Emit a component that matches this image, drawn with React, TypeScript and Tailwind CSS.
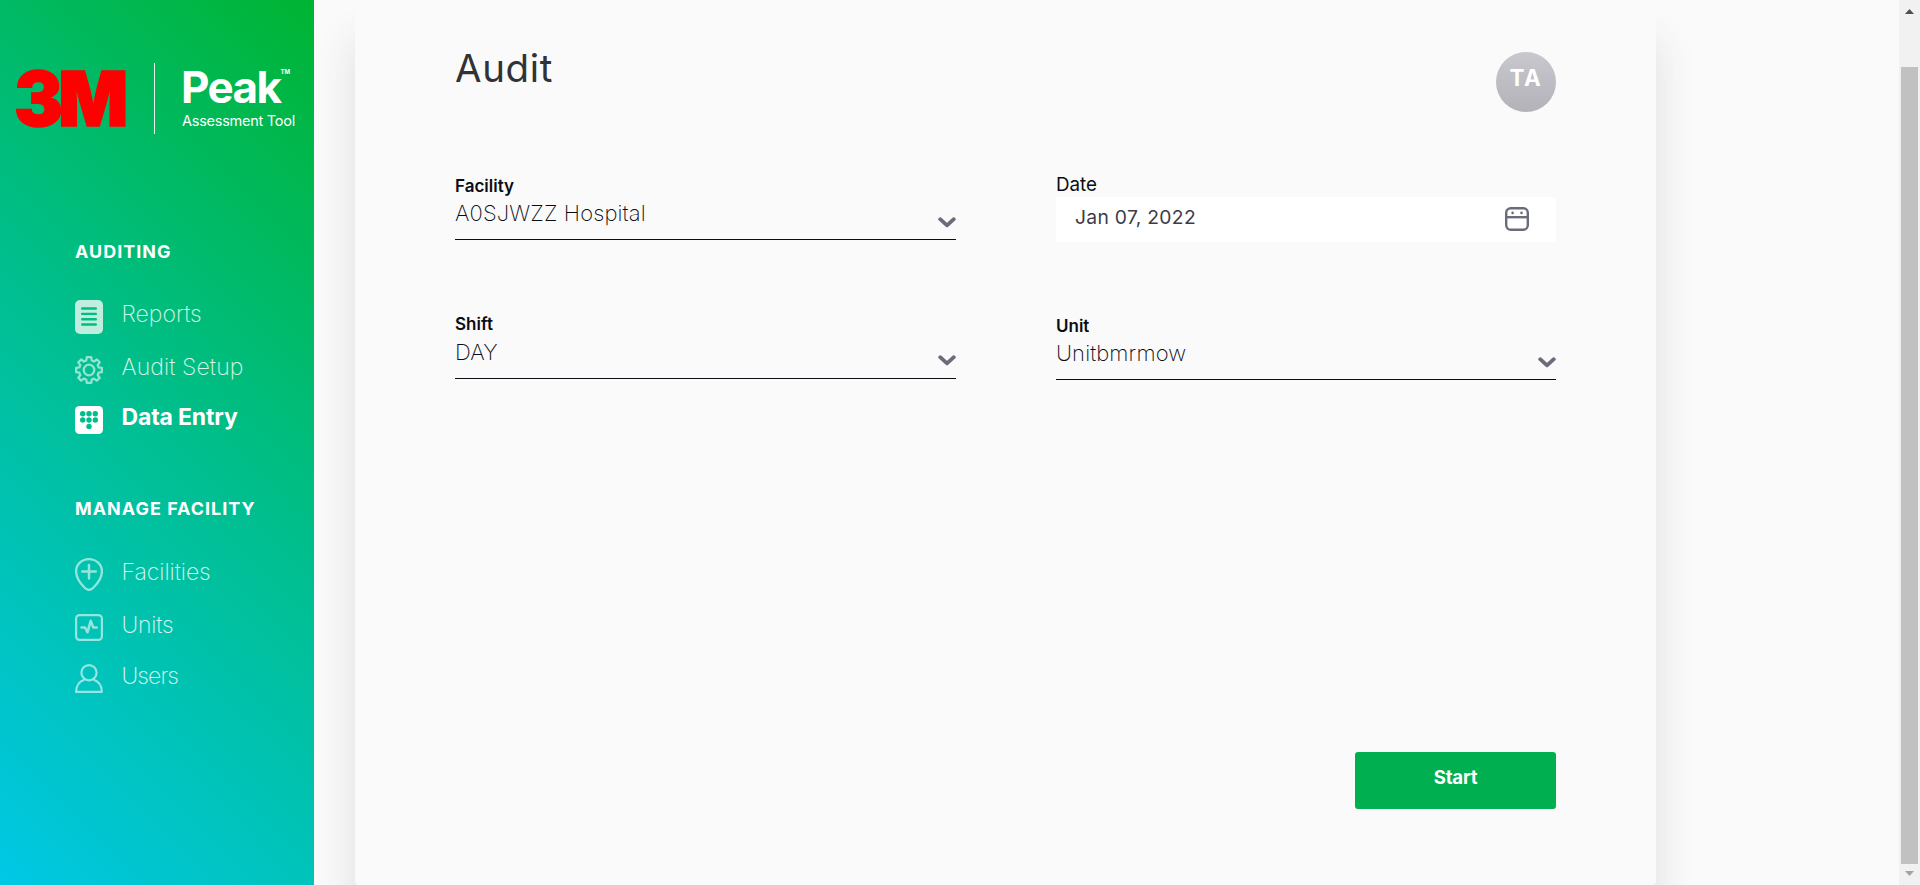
import React from "react";

function Heading({ children, className }: { children: React.ReactNode; className: string }) {
  return (
    <h2 className={`ml-[75px] h-[18px] whitespace-nowrap text-[17.900px] leading-[18px] font-bold text-white ${className}`}>
      {children}
    </h2>
  );
}

function NavItem({
  icon,
  iconClass,
  label,
  labelClass,
  className,
}: {
  icon: React.ReactNode;
  iconClass: string;
  label: string;
  labelClass: string;
  className: string;
}) {
  return (
    <a className={`ml-[75px] flex items-start gap-[18.500px] ${className}`}>
      <span className={`w-7 shrink-0 ${iconClass}`}>{icon}</span>
      <span className={`whitespace-nowrap text-[23px] leading-7 ${labelClass}`}>{label}</span>
    </a>
  );
}

const ReportsIcon = () => (
  <svg width="28" height="34" viewBox="0 0 28 34" className="block">
    <rect width="28" height="34" rx="5" fill="#bfeede" />
    <path d="M7.2 8.5h13.6M7.2 13.9h13.6M7.2 19.2h13.6M7.2 24.5h13.6" stroke="#00bd82" strokeWidth="2.4" strokeLinecap="round" />
  </svg>
);

const GearIcon = () => (
  <svg width="28" height="28" viewBox="0 0 28 28" fill="none" stroke="#fff" strokeOpacity=".58" strokeWidth="2.300" strokeLinejoin="round" className="block">
    <path d="M11.800 1.200h4.400l.6 3.300 2.300 1 2.800-2 2.800 2.800-2 2.900 1 2.200 3.200.5v4.200l-3.200.6-1 2.300 2 2.800-2.900 2.800-2.800-2-2.200.9-.6 3.300h-4.400l-.6-3.300-2.300-.9-2.800 2-2.800-2.900 2-2.700-1-2.300-3.200-.6v-4.200l3.200-.5 1-2.200-2-2.900 2.900-2.800 2.700 2 2.300-1z" />
    <circle cx="14" cy="14" r="5.300" />
  </svg>
);

const KeypadIcon = () => (
  <svg width="28" height="28" viewBox="0 0 28 28" className="block">
    <rect width="28" height="28" rx="4.500" fill="#fff" />
    <g fill="#00be8c">
      <circle cx="7.700" cy="7.700" r="2.700" />
      <circle cx="14" cy="7.700" r="2.700" />
      <circle cx="20.300" cy="7.700" r="2.700" />
      <circle cx="7.700" cy="14" r="2.700" />
      <circle cx="14" cy="14" r="2.700" />
      <circle cx="20.300" cy="14" r="2.700" />
      <circle cx="14" cy="20.400" r="2.700" />
    </g>
  </svg>
);

const PinIcon = () => (
  <svg width="28" height="33" viewBox="0 0 28 33" fill="none" stroke="#fff" strokeOpacity=".58" strokeWidth="2.300" className="block">
    <path d="M14 1.100C6.800 1.100 1.100 6.500 1.100 13.300c0 5.700 4.300 12.400 8.900 16.700 2.700 2.500 5.300 2.500 8 0 4.600-4.300 8.900-11 8.900-16.700C26.900 6.500 21.200 1.100 14 1.100z" />
    <path d="M14 7v13.500M7.200 13.500h13.600" strokeLinecap="round" strokeWidth="2.500" />
  </svg>
);

const UnitsIcon = () => (
  <svg width="28" height="27" viewBox="0 0 28 27" fill="none" stroke="#fff" strokeOpacity=".58" strokeLinejoin="round" strokeLinecap="round" className="block">
    <rect x="1.100" y="1.100" width="25.800" height="24.800" rx="3.500" strokeWidth="2.200" />
    <path d="M6.500 13.500H10l2.500 4.800 3.200-11.500 2.600 6.700h3.400" strokeWidth="2.500" />
  </svg>
);

const UsersIcon = () => (
  <svg width="28" height="29" viewBox="0 0 28 29" fill="none" stroke="#fff" strokeOpacity=".58" strokeWidth="2.200" strokeLinejoin="round" className="block">
    <circle cx="14" cy="8.700" r="7.600" />
    <path d="M9.500 15.700C4.400 17.200 1.300 22 1.100 27.800h25.800c-.2-5.800-3.300-10.600-8.400-12.100" />
  </svg>
);

const Chevron = () => (
  <svg width="18" height="11" viewBox="0 0 18 11" fill="none" className="block">
    <path d="M2.200 2.200 9 8.300l6.800-6.100" stroke="#6b6c79" strokeWidth="3.800" strokeLinecap="round" strokeLinejoin="round" />
  </svg>
);

const CalendarIcon = () => (
  <svg width="24" height="24" viewBox="0 0 24 24" fill="none" stroke="#6b6c79" strokeWidth="2.400" className="block">
    <rect x="1.200" y="1.200" width="21.600" height="21.600" rx="4.500" />
    <path d="M1 10.200h22" />
    <circle cx="7.600" cy="5.900" r="1.300" fill="#6b6c79" stroke="none" />
    <circle cx="16.500" cy="5.900" r="1.300" fill="#6b6c79" stroke="none" />
  </svg>
);

function SelectField({
  label,
  value,
  valueClass,
  chevronClass,
  className,
}: {
  label: string;
  value: string;
  valueClass: string;
  chevronClass: string;
  className: string;
}) {
  return (
    <div className={`border-b border-[#0c0c16] text-[#0c0c14] ${className}`}>
      <div className="h-5 text-[17px] leading-5 font-semibold">{label}</div>
      <div className={`flex items-start justify-between ${valueClass}`}>
        <span className="text-[22px] leading-6 font-extralight tracking-[0.120px]">{value}</span>
        <span className={chevronClass}>
          <Chevron />
        </span>
      </div>
    </div>
  );
}

function Sidebar() {
  return (
    <aside className="flex h-full w-[314px] shrink-0 flex-col bg-[linear-gradient(45deg,#00c8e6_0%,#00bf93_50%,#00b432_100%)]">
      <div className="flex h-[134px] items-start pt-[63px]">
        <div className="mt-[6px] ml-[14px] h-[60px] w-[140px]">
          <div className="w-[140px] origin-left scale-x-[0.97] text-[75.500px] leading-[60px] font-black tracking-[-5px] text-[#ff0000] [-webkit-text-stroke:1.500px_#ff0000]">
            3M
          </div>
        </div>
        <div className="h-[71px] w-px bg-white/90" />
        <div className="ml-[26px] flex flex-col whitespace-nowrap text-white">
          <div className="flex h-12 items-start">
            <span className="text-[44px] leading-[48px] font-bold tracking-[-1.600px]">Peak</span>
            <span className="mt-[6px] text-[6px] leading-[6px] font-bold">TM</span>
          </div>
          <div className="mt-[1px] ml-px text-[14.500px] leading-[17px] tracking-[-0.250px]">Assessment Tool</div>
        </div>
      </div>
      <nav className="flex flex-col">
        <Heading className="mt-[109px] tracking-[1.050px]">AUDITING</Heading>
        <NavItem className="mt-[39px] h-[53px]" iconClass="" icon={<ReportsIcon />} label="Reports" labelClass="font-extralight text-white/85" />
        <NavItem className="h-[50px]" iconClass="mt-[3px]" icon={<GearIcon />} label="Audit Setup" labelClass="font-extralight text-white/85 tracking-[0.100px]" />
        <NavItem className="h-[50px]" iconClass="mt-[3px]" icon={<KeypadIcon />} label="Data Entry" labelClass="font-bold text-white tracking-[-0.150px]" />
        <Heading className="mt-[47px] tracking-[1.050px]">MANAGE FACILITY</Heading>
        <NavItem className="mt-[40px] h-[53px]" iconClass="" icon={<PinIcon />} label="Facilities" labelClass="font-extralight text-white/85 tracking-[-0.050px]" />
        <NavItem className="h-[51px]" iconClass="mt-[3px]" icon={<UnitsIcon />} label="Units" labelClass="font-extralight text-white/85 tracking-[-0.200px]" />
        <NavItem className="h-[50px]" iconClass="mt-[2px]" icon={<UsersIcon />} label="Users" labelClass="font-extralight text-white/85 tracking-[-0.900px]" />
      </nav>
    </aside>
  );
}

function AuditCard() {
  return (
    <main className="ml-[41px] h-[885px] w-[1301px] shrink-0 rounded-b-sm bg-[#fafafa] pl-[100px] shadow-[0_40px_40px_0_rgba(60,60,90,0.140)]">
      <header className="flex h-[175px] w-[1101px] items-start justify-between pt-[52px]">
        <h1 className="text-[38.500px] leading-8 tracking-[0.600px] text-[#323234]">Audit</h1>
        <div className="flex size-[60px] justify-center rounded-full bg-linear-to-b from-[#c8c8ce] to-[#b2b2b8]">
          <span className="mt-[12px] text-[22.500px] leading-7 font-bold tracking-[1.500px] text-white">TA</span>
        </div>
      </header>
      <div className="grid w-[1101px] grid-cols-[501px_500px] items-start gap-x-[100px]">
        <SelectField label="Facility" value="A0SJWZZ Hospital" valueClass="mt-[5px]" chevronClass="mt-4" className="mt-px h-[64px]" />
        <div>
          <div className="h-[22px] text-[18.800px] leading-5 text-[#0c0c14]">Date</div>
          <div className="flex h-[45px] items-start justify-between bg-white pr-[27px] pl-[19px]">
            <span className="mt-2 text-[19.300px] leading-6 tracking-[0.300px] text-[#3c3c46]">Jan 07, 2022</span>
            <span className="mt-[10px]">
              <CalendarIcon />
            </span>
          </div>
        </div>
        <SelectField label="Shift" value="DAY" valueClass="mt-[6px]" chevronClass="mt-[15px]" className="mt-[72px] h-[65px]" />
        <SelectField label="Unit" value="Unitbmrmow" valueClass="mt-[5px]" chevronClass="mt-4" className="mt-[74px] h-[64px]" />
      </div>
      <div className="mt-[372px] flex w-[1101px] justify-end">
        <button className="flex h-[57px] w-[201px] justify-center rounded-[3px] bg-[#00b050] text-white">
          <span className="mt-[13px] text-[18.600px] leading-6 font-bold tracking-[-0.200px]">Start</span>
        </button>
      </div>
    </main>
  );
}

function Scrollbar() {
  return (
    <div className="ml-auto flex h-full w-[21px] shrink-0 flex-col items-center bg-[#f1f1f1]">
      <svg width="9" height="5" viewBox="0 0 9 5" className="mt-[9px] block" fill="#505050">
        <path d="M4.500 0 9 5H0z" />
      </svg>
      <div className="mt-[53px] h-[797px] w-[17px] bg-[#c1c1c1]" />
      <svg width="9" height="5" viewBox="0 0 9 5" className="mt-[7px] block" fill="#a3a3a3">
        <path d="M0 0h9L4.500 5z" />
      </svg>
    </div>
  );
}

export default function App() {
  return (
    <div className="flex h-[885px] w-[1920px] overflow-hidden bg-[#fafafa] font-['Inter',sans-serif]">
      <Sidebar />
      <AuditCard />
      <Scrollbar />
    </div>
  );
}
